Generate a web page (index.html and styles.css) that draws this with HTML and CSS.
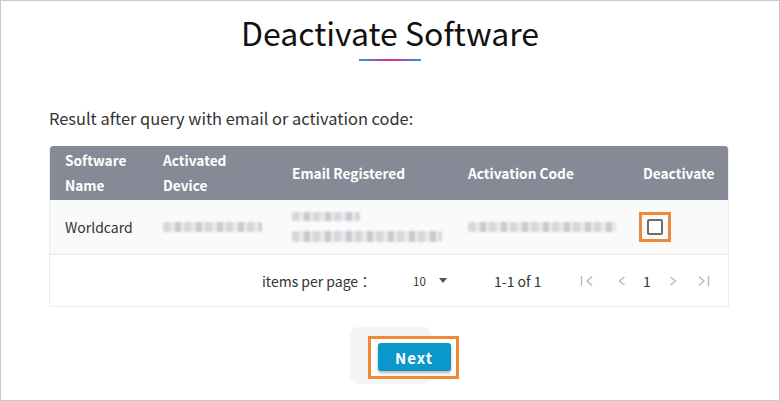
FILE: index.html
```html
<!DOCTYPE html>
<html lang="en">
<head>
<meta charset="utf-8">
<link rel="stylesheet" href="styles.css">
</head>
<body>
<div class="frame">
  <h1 class="title">Deactivate Software</h1>
  <div class="title-bar"></div>
  <p class="intro">Result after query with email or activation code:</p>
  <div class="card">
    <div class="row head">
      <div class="cell">Software<br>Name</div>
      <div class="cell">Activated<br>Device</div>
      <div class="cell">Email Registered</div>
      <div class="cell">Activation Code</div>
      <div class="cell">Deactivate</div>
    </div>
    <div class="row body">
      <div class="cell">Worldcard</div>
      <div class="cell"><span class="blur b-device"></span></div>
      <div class="cell stack"><span class="blur b-email1"></span><span class="blur b-email2"></span></div>
      <div class="cell"><span class="blur b-code"></span></div>
      <div class="cell"><span class="hl"><span class="check"></span></span></div>
    </div>
    <div class="foot">
      <span class="ipp">items per page：</span>
      <span class="select"><span class="sel-val">10</span><span class="caret"></span></span>
      <span class="range">1-1 of 1</span>
      <span class="pager">
        <svg class="pg pg-first" width="14" height="14" viewBox="0 0 14 14"><path d="M1.5 2v10M12 2.5 7 7l5 4.5" fill="none" stroke="#b8b8b8" stroke-width="1.4"/></svg>
        <svg class="pg pg-prev" width="14" height="14" viewBox="0 0 14 14"><path d="M9.5 3 4.5 7l5 4" fill="none" stroke="#b8b8b8" stroke-width="1.4"/></svg>
        <span class="pnum">1</span>
        <svg class="pg pg-next" width="14" height="14" viewBox="0 0 14 14"><path d="M4.5 3 9.5 7l-5 4" fill="none" stroke="#b8b8b8" stroke-width="1.4"/></svg>
        <svg class="pg pg-last" width="14" height="14" viewBox="0 0 14 14"><path d="M12.5 2v10M3 2.5 8 7l-5 4.5" fill="none" stroke="#b8b8b8" stroke-width="1.4"/></svg>
      </span>
    </div>
  </div>
  <div class="actions">
    <div class="ripple">
      <span class="hl-btn"><button class="next">Next</button></span>
    </div>
  </div>
</div>
</body>
</html>
```
FILE: styles.css
```css
html, body {
  margin: 0;
  padding: 0;
  background: #fff;
}
.frame {
  width: 780px;
  height: 401px;
  box-sizing: border-box;
  border: 1px solid #c9c9c9;
  font-family: "Noto Sans CJK JP", "Source Sans Pro", "Noto Sans", sans-serif;
  color: #333;
  padding-top: 11px;
}
.title {
  margin: 0;
  text-align: center;
  font-size: 32px;
  line-height: 40px;
  font-weight: 400;
  color: #111;
}
.title-bar {
  width: 62px;
  height: 2px;
  margin: 7px auto 0;
  background: linear-gradient(90deg, #2196f3 0%, #e0307a 50%, #2196f3 100%);
}
.intro {
  margin: 45px 0 0 48px;
  font-size: 16.4px;
  line-height: 24px;
  color: #333;
}
.card {
  margin: 16px 0 0 48px;
  width: 680px;
  box-sizing: border-box;
  border: 1px solid #ececec;
  border-top: 0;
  border-radius: 4px 4px 2px 2px;
  overflow: hidden;
}
.row {
  display: grid;
  grid-template-columns: 98px 129px 176px 175px 1fr;
  align-items: center;
}
.cell {
  padding-left: 15px;
  white-space: nowrap;
}
.head {
  height: 54px;
  background: #868a97;
  color: #fff;
  font-weight: 700;
  font-size: 13.7px;
  line-height: 25px;
  margin: 0 -1px;
  padding: 0 1px;
}
.body {
  height: 54px;
  background: #fafafa;
  border-bottom: 1px solid #e6e6e6;
  font-size: 14px;
  color: #333;
}
.stack {
  display: flex;
  flex-direction: column;
  gap: 10px;
}
.blur {
  display: block;
  height: 10px;
  border-radius: 2px;
  filter: blur(1.2px);
  background:
    repeating-linear-gradient(90deg, #cfd1d6 0 7px, #e6e7ea 7px 12px, #bfc2c8 12px 18px, #e9eaec 18px 21px);
  opacity: 0.85;
}
.b-device { width: 99px; }
.b-email1 { width: 68px; height: 9px; }
.b-email2 { width: 150px; height: 11px; }
.b-code { width: 148px; }
.hl {
  display: inline-flex;
  margin-left: -4px;
  border: 3px solid #f0883a;
  padding: 4px 5px;
}
.check {
  width: 16px;
  height: 16px;
  box-sizing: border-box;
  border: 2px solid #6c6c6c;
  border-radius: 2px;
  background: #fff;
}
.foot {
  height: 51px;
  display: flex;
  align-items: center;
  font-size: 14px;
  color: #333;
  background: #fff;
  white-space: nowrap;
}
.foot > span {
  flex-shrink: 0;
}
.ipp {
  margin-left: 212px;
  width: 151px;
}
.select {
  display: inline-flex;
  align-items: center;
  width: 81px;
}
.sel-val {
  font-size: 11.5px;
  color: #333;
}
.caret {
  margin-left: 13px;
  width: 0;
  height: 0;
  border-left: 4px solid transparent;
  border-right: 4px solid transparent;
  border-top: 5px solid #555;
}
.range {
  width: 86px;
}
.pager {
  display: inline-flex;
  align-items: center;
}
.pg {
  display: block;
}
.pg-prev { margin-left: 21px; }
.pnum {
  margin-left: 14px;
  width: 8px;
  color: #333;
}
.pg-next { margin-left: 15px; }
.pg-last { margin-left: 16px; }
.actions {
  display: flex;
  justify-content: center;
  margin-top: 20px;
}
.ripple {
  position: relative;
  width: 81px;
  height: 57px;
  border-radius: 8px;
  background: #f5f5f5;
}
.hl-btn {
  position: absolute;
  left: 18px;
  top: 9px;
  display: block;
  border: 3px solid #f0883a;
  padding: 4px 5px 5px 7px;
  background: #fff;
}
.next {
  display: block;
  width: 73px;
  height: 28px;
  border: 0;
  border-radius: 3px;
  background: #0a97c9;
  color: #fff;
  font-family: "Noto Sans CJK JP", "Noto Sans", sans-serif;
  font-weight: 700;
  font-size: 15px;
  letter-spacing: 1px;
  box-shadow: 0 2px 3px rgba(0,0,0,0.3);
  padding: 0;
}
```
